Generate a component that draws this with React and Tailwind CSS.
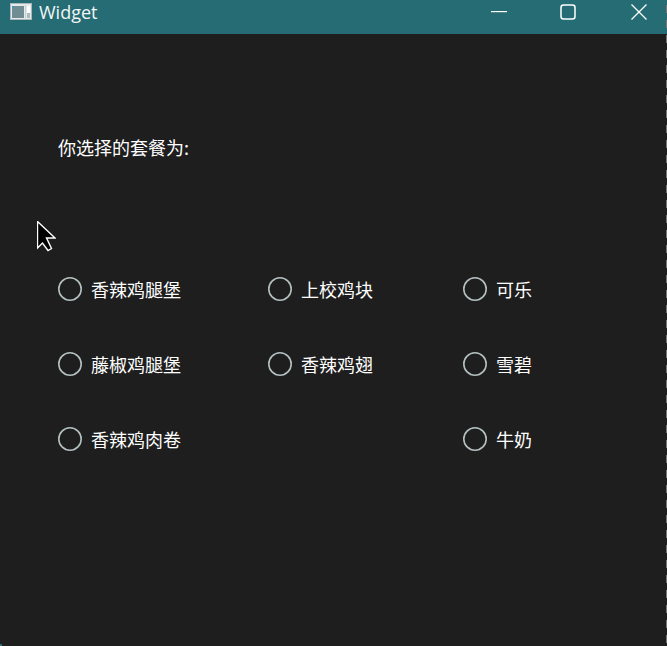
const font = { fontFamily: '"Noto Sans CJK SC", sans-serif' };

const options = [
  '香辣鸡腿堡', '上校鸡块', '可乐',
  '藤椒鸡腿堡', '香辣鸡翅', '雪碧',
  '香辣鸡肉卷', null, '牛奶',
];

function Radio({ label }) {
  return (
    <div className="flex items-center h-[25px] gap-[9px]">
      <svg width="24" height="24" viewBox="0 0 24 24" className="shrink-0">
        <circle cx="12" cy="12" r="11.2" fill="none" stroke="#b4c0c0" strokeWidth="1.6" />
      </svg>
      <span className="text-[18px] leading-[25px] text-white mt-[2px]">{label}</span>
    </div>
  );
}

export default function App() {
  return (
    <div className="relative w-[667px] h-[646px] overflow-hidden bg-[#1e1e1e]" style={font}>
      <div className="flex items-center h-[34px] bg-[#256c74]">
        <svg className="ml-[10px] mb-[11px]" width="22" height="17" viewBox="0 0 22 17">
          <rect x="0.5" y="0.5" width="21" height="16" fill="#e6eaea" stroke="#a9b8ba" />
          <rect x="2" y="3" width="12" height="12" fill="#6f8d92" />
          <rect x="2" y="3" width="2" height="2" fill="#4f8fc0" />
          <rect x="15" y="2" width="1" height="13" fill="#c3cfd0" />
          <rect x="17" y="3" width="3" height="7" fill="#ffffff" />
          <rect x="17" y="10" width="3" height="5" fill="#a9bcbf" />
        </svg>
        <span className="ml-[7px] mb-[11px] text-[18px] leading-none text-[#f2f6f6]" style={{ fontFamily: '"Open Sans", sans-serif' }}>
          Widget
        </span>
        <div className="ml-auto flex items-center mb-[11px]">
          <svg width="16" height="2" viewBox="0 0 16 2" className="mr-[53px]">
            <rect width="16" height="1.2" fill="#ffffff" />
          </svg>
          <svg width="16" height="16" viewBox="0 0 16 16" className="mr-[55px]">
            <rect x="1" y="1" width="14" height="14" rx="2.5" fill="none" stroke="#ffffff" strokeWidth="1.5" />
          </svg>
          <svg width="16" height="16" viewBox="0 0 16 16" className="mr-5">
            <path d="M0.5 0.5L15.5 15.5M15.5 0.5L0.5 15.5" stroke="#ffffff" strokeWidth="1.3" />
          </svg>
        </div>
      </div>

      <div className="pl-[58px] pt-[99px]">
        <div className="text-[18px] leading-[28px] text-white">你选择的套餐为:</div>
        <div className="grid grid-cols-[210px_195px_1fr] auto-rows-[75px] mt-[115px]">
          {options.map((label, i) => (
            <div key={i}>{label && <Radio label={label} />}</div>
          ))}
        </div>
      </div>

      {/* mouse pointer */}
      <svg className="absolute left-[37px] top-[221px]" width="19" height="31" viewBox="0 0 19 31">
        <path d="M0.5 0.5V27L5.5 22L11 29.5L14.5 27.5L9.5 17H18Z" fill="#000000" stroke="#ffffff" strokeWidth="1.4" />
      </svg>

      {/* screenshot edge */}
      <div className="absolute right-0 top-[5px] bottom-0 w-px bg-[repeating-linear-gradient(to_bottom,#777_0px,#777_8px,transparent_8px,transparent_15px)]" />
      <div className="absolute left-0 bottom-0 w-[2px] h-[2px] bg-[#256c74]" />
    </div>
  );
}
